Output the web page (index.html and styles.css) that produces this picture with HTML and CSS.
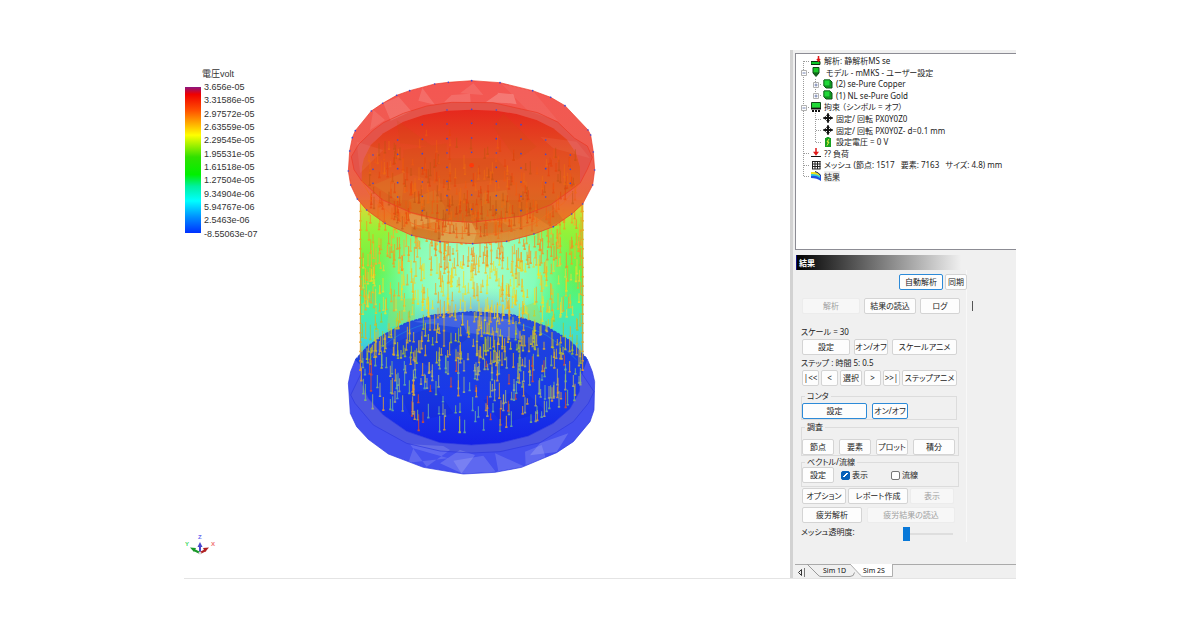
FILE: index.html
```
<!DOCTYPE html>
<html lang="ja">
<head>
<meta charset="utf-8">
<title>静解析MS se</title>
<link rel="stylesheet" href="styles.css">
</head>
<body>
<main class="app">
  <section class="viewport">
    <div class="legend">
      <h2 class="legend-title">電圧volt</h2>
      <div class="legend-bar"></div>
      <ol class="legend-labels">
        <li>3.656e-05</li><li>3.31586e-05</li><li>2.97572e-05</li><li>2.63559e-05</li><li>2.29545e-05</li><li>1.95531e-05</li><li>1.61518e-05</li><li>1.27504e-05</li><li>9.34904e-06</li><li>5.94767e-06</li><li>2.5463e-06</li><li>-8.55063e-07</li>
      </ol>
    </div>
    <svg class="model" viewBox="0 0 810 1245" aria-label="電圧コンタ">
      <defs>
        <linearGradient id="wall" x1="0" y1="400" x2="0" y2="900" gradientUnits="userSpaceOnUse">
          <stop offset="0" stop-color="#e0d838"/><stop offset=".16" stop-color="#96f238"/><stop offset=".42" stop-color="#68f24a"/><stop offset=".62" stop-color="#48f49a"/><stop offset=".8" stop-color="#42dcd0"/><stop offset="1" stop-color="#3c9cf4"/>
        </linearGradient>
        <radialGradient id="glow" cx="400" cy="610" r="310" gradientTransform="translate(0 122) scale(1 .8)" gradientUnits="userSpaceOnUse">
          <stop offset="0" stop-color="#aaffd0"/><stop offset=".6" stop-color="#8cffca" stop-opacity=".85"/><stop offset="1" stop-color="#60ff90" stop-opacity="0"/>
        </radialGradient>
        <radialGradient id="haze" cx="400" cy="770" r="240" gradientTransform="translate(0 385) scale(1 .5)" gradientUnits="userSpaceOnUse">
          <stop offset="0" stop-color="#5c88dc"/><stop offset=".5" stop-color="#78b4d8" stop-opacity=".7"/><stop offset="1" stop-color="#80d8d8" stop-opacity="0"/>
        </radialGradient>
        <linearGradient id="lid" x1="0" y1="120" x2="0" y2="457" gradientUnits="userSpaceOnUse">
          <stop offset="0" stop-color="#e52014"/><stop offset=".35" stop-color="#e24418"/><stop offset=".7" stop-color="#e05a18"/><stop offset="1" stop-color="#d2651c"/>
        </linearGradient>
        <linearGradient id="rim" x1="0" y1="32" x2="0" y2="521" gradientUnits="userSpaceOnUse">
          <stop offset="0" stop-color="#f4504c"/><stop offset=".5" stop-color="#ee5848"/><stop offset=".7" stop-color="#ea6038"/><stop offset=".83" stop-color="#ea7424"/><stop offset="1" stop-color="#d89038"/>
        </linearGradient>
        <linearGradient id="floor" x1="0" y1="725" x2="0" y2="1130" gradientUnits="userSpaceOnUse">
          <stop offset="0" stop-color="#2850dc"/><stop offset=".3" stop-color="#1c40e0"/><stop offset=".65" stop-color="#1838ea"/><stop offset="1" stop-color="#1420e6"/>
        </linearGradient>
      </defs>
      <path fill="url(#wall)" d="M60 390H730V900H60z"/>
      <path fill="url(#glow)" d="M60 390H730V860H60z"/>
      <path fill="url(#haze)" d="M100 640H700V830H100z"/>
      <g fill="#9be060" opacity=".5"><path d="M150 690l75-5v62l-85 30z"/><path d="M535 715l55-20 25 105z"/></g>

      <path fill="#4450ee" d="M46 870L80 832 130 795 200 758 280 735 395 725 520 735 620 770 690 812 742 868 757 905 764 935 762 1020 750 1055 700 1115 650 1148 545 1192 465 1207 370 1212 250 1192 145 1152 85 1108 50 1070 31 1030 25 940 32 905z"/>
      <path fill="url(#floor)" d="M46 870L80 832 130 795 200 758 280 735 395 725 520 735 620 770 690 812 742 868 722 925 718 965 690 1016 640 1060 565 1098 480 1119 394 1125 300 1118 200 1084 130 1035 85 985 66 940 66 890z"/>
      <path fill="#4b55e2" d="M66 905L32 975 45 1000 100 1065 200 1120 300 1143 395 1149 480 1145 600 1118 700 1055 745 1000 762 965 722 905 718 965 690 1016 640 1060 565 1098 480 1119 394 1125 300 1118 200 1084 130 1035 85 985 66 940z"/>
      <path fill="#fff" opacity=".16" d="M360 735l85 5 75 10 30 58-170-20zM300 1180l60-40 45 15-40 55zM600 1120l85-30-35 56-80 10z"/>
      <path fill="#fff" opacity=".14" d="M260 1190l70-50-20-12-100-5zM340 1172l90-15 37 48-102 6zM555 1145l50-20 14 45-62 15zM220 1135l105 30-120 13zM220 755l150-22-10 40zM465 1150l90 40-80 14z"/>
      <path fill="#1020b4" opacity=".18" d="M140 830l120-55 130 25-120 90zM410 810l170 10-40 70-120 15zM180 975l110-20 50 75-120 25zM430 990l120-30 70 65-135 35z"/>
      <g fill="none" stroke="#2c38e0" stroke-width="2">
        <path d="M46 870L32 905 25 940 31 1030 50 1070 85 1108 145 1152 250 1192 370 1212 465 1207 545 1192 650 1148 700 1115 750 1055 762 1020 764 935 757 905 742 868"/>
        <path d="M66 905L32 975 45 1000 100 1065 200 1120 300 1143 395 1149 480 1145 600 1118 700 1055 745 1000 762 965 722 905"/>
        <path d="M66 900V940L85 985 130 1035 200 1084 300 1118 394 1125 480 1119 565 1098 640 1060 690 1016 718 965 722 900"/>
      </g>
      <path d="M46 870L80 832 130 795 200 758 280 735 395 725 520 735 620 770 690 812 742 868" fill="none" stroke="#2448d8" stroke-width="4" stroke-dasharray="9 3"/>
      <path d="M86 870Q170 775 290 755M510 755Q630 780 710 870" fill="none" stroke="#20a8dc" stroke-width="2" opacity=".6"/>
      <g id="arrows-lower"></g>

      <g opacity=".96">
        <path fill="url(#rim)" d="M395 32L480 38 578 62 632 82 675 107 744 180 752 195 760 246 764 300 758 345 728 402 695 432 640 470 582 492 500 514 398 521 300 515 215 496 135 460 80 420 52 387 32 345 25 303 29 243 37 203 46 182 94 123 128 100 170 76 209 62 284 42 325 37z"/>
        <path fill="#e34d42" d="M335 97L459 98 593 128 653 156 704 205 742 228 757 262 742 298 720 340V290L708 248 680 208 640 175 590 150 530 132 470 122 394 119 320 122 250 135 190 155 130 190 92 225 72 265 66 333 42 299 34 260 56 223 98 182 130 158 190 130 260 108z"/>
        <path fill="url(#lid)" d="M394 119L470 122 530 132 590 150 640 175 680 208 708 248 720 290V340L633 404 547 438 398 457 312 452 211 427 126 389 65 333 66 290 72 265 92 225 130 190 190 155 250 135 320 122z"/>
      </g>
      <g fill="#fff">
        <path opacity=".13" d="M130 100l22 52 62-28-38-44zM235 92l50 12-38-50zM335 75l55-4 2 26h-80z"/>
        <path opacity=".2" d="M437 97l40-28 20 30zM472 68l48 5 10 30-35-5z"/>
        <path opacity=".1" d="M100 120l35 30-45 30zM360 70l40-30 30 35z"/>
        <path opacity=".06" d="M485 42l95 22 75 90-90-30zM600 200l110 15 40 50-110-30zM50 215l80 25-70 70z"/>
      </g>
      <path fill="#d89a30" opacity=".2" d="M205 390l80-30 30 50-4 40-100-22zM410 450l20-80 70-10 20 90zM100 345l95-40-10 95z"/>
      <path fill="#c0601c" opacity=".3" d="M215 470l90 18-5 26-85-18zM395 458l90-2 45 26-100 10zM570 430l65-26 35 45-40 20z"/>
      <path fill="#e0c070" opacity=".4" d="M312 452l83 6 15 30-10 33-100-7zM205 428l90 25-80 17z"/>
      <path fill="#c9500e" opacity=".16" d="M190 240l130-20v45h150l50 60-200 20-130-40zM490 130l100 100-60 40-70-100zM170 150l110 80-100-10z"/>
      <g id="arrows-upper"></g>
      <g fill="none" stroke="#ec3824" stroke-width="2">
        <path id="outer" d="M395 32L480 38 578 62 632 82 675 107 744 180 752 195 760 246 764 300 758 345 728 402 695 432 640 470 582 492 500 514 398 521 300 515 215 496 135 460 80 420 52 387 32 345 25 303 29 243 37 203 46 182 94 123 128 100 170 76 209 62 284 42 325 37z"/>
        <path d="M335 97L459 98 593 128 653 156 704 205 742 228 757 262 742 298 720 340 633 404 547 438 398 457 312 452 211 427 126 389 65 333 42 299 34 260 56 223 98 182 130 158 190 130 260 108z"/>
        <path d="M65 333L90 375 150 430 230 466 330 490 470 492 580 462 670 400 720 340" stroke="#f06a20"/>
      </g>
      <g id="nodes" fill="#3b48d8"></g>
      <circle cx="395" cy="286" r="7" fill="#ff3808"/>
    </svg>
    <svg class="axes" viewBox="0 0 32 24" aria-label="座標軸">
      <g class="axis-text"><text x="13" y="6" fill="#6868f0">Z</text><text x="0" y="13" fill="#40d860">Y</text><text x="26" y="13" fill="#f07070">X</text></g>
      <path d="M15 20V13" stroke="#4848d0" stroke-width="2"/><path d="M12.500 14l2.500-5 2.500 5z" fill="#4848d0"/>
      <path d="M15 20l-6-3" stroke="#189828" stroke-width="2"/><path d="M5 14.500l6 .5-2 4z" fill="#189828"/>
      <path d="M15 20l6-3" stroke="#b02020" stroke-width="2"/><path d="M24 14.500l-6 .5 2 4z" fill="#b02020"/>
      <circle cx="15" cy="20" r="1.500" fill="#ddd"/>
    </svg>
  </section>

  <aside class="panel">
    <div class="tree">
      <svg class="tree-lines" viewBox="0 0 40 127" aria-hidden="true">
        <g fill="none" stroke="#9a9a9a" stroke-dasharray="1 1"><path d="M7.500 6V121M8 6.500h6M8 17.500h6M8 52.500h6M8 98.500h6M8 110.500h6M8 121.500h6"/><path d="M19.500 24V42M20 29.500h6M20 40.500h6M19.500 58V87M20 64.500h6M20 75.500h6M20 87.500h6"/></g>
        <g fill="#fff" stroke="#b0b0b0"><path d="M5.500 15.500h5v5h-5zM5.500 50.500h5v5h-5zM17.500 27.500h5v5h-5zM17.500 38.500h5v5h-5z"/></g>
        <path d="M6.500 18h3M6.500 53h3M18.500 30h3M18.500 41h3M20 28.500v3M20 39.500v3" stroke="#7080b0"/>
      </svg>
      <ul class="tree-list">
        <li><svg viewBox="0 0 10 10"><path d="M0 5.500h9v3H0z" fill="#10c828" stroke="#083010"/><path d="M7.500 0v5M6 3l1.500 2L9 3" stroke="#e01818" stroke-width="1.500" fill="none"/></svg>解析: 静解析MS se</li>
        <li><svg viewBox="0 0 10 10"><path d="M2 .5h6V6L5 9.500 2 6z" fill="#18c828" stroke="#104818"/><path d="M2 6h6M4 6v2h2V6" stroke="#104818" fill="none"/></svg>&nbsp;モデル - mMKS - ユーザー設定</li>
        <li class="child"><svg viewBox="0 0 10 10"><path d="M1 1h6l2 2v6H3L1 7z" fill="#10a820" stroke="#104818"/><path d="M1 1h6v6H1z" fill="#20d838" stroke="#108020"/></svg>(2) se-Pure Copper</li>
        <li class="child"><svg viewBox="0 0 10 10"><path d="M1 1h6l2 2v6H3L1 7z" fill="#10a820" stroke="#104818"/><path d="M1 1h6v6H1z" fill="#20d838" stroke="#108020"/></svg>(1) NL se-Pure Gold</li>
        <li><svg viewBox="0 0 10 10"><path d="M.5.5h9V6h-9z" fill="#20d838" stroke="#104818"/><path d="M0 6h10v1.500H0zM1 8h2v2H1zM4 8h2v2H4zM7 8h2v2H7z" fill="#111"/></svg>拘束 （シンボル = オフ）</li>
        <li class="child"><svg viewBox="0 0 10 10"><path d="M5 0v10M0 5h10" stroke="#111"/><path d="M3 3l2-3 2 3zM3 7l2 3 2-3zM3 3L0 5l3 2zM7 3l3 2-3 2z" fill="#111"/><path d="M3 5h4M5 3v4" stroke="#111" stroke-width="2"/></svg>固定/ 回転 PX0Y0Z0</li>
        <li class="child"><svg viewBox="0 0 10 10"><path d="M5 0v10M0 5h10" stroke="#111"/><path d="M3 3l2-3 2 3zM3 7l2 3 2-3zM3 3L0 5l3 2zM7 3l3 2-3 2z" fill="#111"/><path d="M3 5h4M5 3v4" stroke="#111" stroke-width="2"/></svg>固定/ 回転 PX0Y0Z- d=0.1 mm</li>
        <li class="child"><svg viewBox="0 0 10 10"><path d="M3.500 0h3v1H8v9H2V1h1.500z" fill="#18a020"/><path d="M6 2L4 5h2L4 8.500" stroke="#e8f040" fill="none"/></svg>設定電圧 = 0 V</li>
        <li><svg viewBox="0 0 10 10"><path d="M5 0v6M3.500 4.500L5 6.500l1.500-2z" stroke="#e01818" stroke-width="1.500" fill="#e01818"/><path d="M0 8.500h10" stroke="#111"/></svg>?? 負荷</li>
        <li><svg viewBox="0 0 10 10"><path d="M1.500 1v8M4 1v8M6.500 1v8M9 1v8M1 1.500h8.500M1 4h8.500M1 6.500h8.500M1 9h8.500" stroke="#222"/></svg>メッシュ (節点: 1517 &nbsp; 要素: 7163 &nbsp; サイズ: 4.8) mm</li>
        <li class="selected"><svg viewBox="0 0 10 10"><path d="M0 1h4q4 1 6 3v6Q6 7 0 7z" fill="#2050e0"/><path d="M0 1h4q4 1 5 3v3Q5 4 0 5z" fill="#30c8e0"/><path d="M0 1h4q4 1 5 4Q5 2.500 0 3z" fill="#f0e020"/><path d="M4 .5q4 1 5.500 4" stroke="#333" fill="none"/></svg><span>結果</span></li>
      </ul>
    </div>

    <h1 class="title">結果</h1>
    <form class="form">
      <div class="row top"><button type="button" class="w44 active">自動解析</button><button type="button" class="w22">同期</button></div>
      <div class="row run"><button type="button" class="w58" disabled>解析</button><button type="button" class="w52">結果の読込</button><button type="button" class="w40">ログ</button><span class="caret"></span></div>
      <p class="text scale">スケール = 30</p>
      <div class="row scale-row"><button type="button" class="w48">設定</button><button type="button" class="w34">オン/オフ</button><button type="button" class="w65">スケールアニメ</button></div>
      <p class="text">ステップ : 時間 5: 0.5</p>
      <div class="row steps"><button type="button" class="w17">|&lt;&lt;</button><button type="button" class="w17">&lt;</button><button type="button" class="w22">選択</button><button type="button" class="w17">&gt;</button><button type="button" class="w17">&gt;&gt;|</button><button type="button" class="w55">ステップアニメ</button></div>
      <fieldset class="contour"><legend>コンタ</legend><div class="group"><button type="button" class="w65 active">設定</button><button type="button" class="w36 active">オン/オフ</button></div></fieldset>
      <fieldset class="survey"><legend>調査</legend><div class="group"><button type="button" class="w32">節点</button><button type="button" class="w32">要素</button><button type="button" class="w32">プロット</button><button type="button" class="w42">積分</button></div></fieldset>
      <fieldset class="vector"><legend>ベクトル/流線</legend><div class="group"><button type="button" class="w32">設定</button><label><input type="checkbox" checked>表示</label><label class="stream"><input type="checkbox">流線</label></div></fieldset>
      <div class="row options"><button type="button" class="w44">オプション</button><button type="button" class="w60">レポート作成</button><button type="button" class="w44" disabled>表示</button></div>
      <div class="row fatigue"><button type="button" class="w60">疲労解析</button><button type="button" class="w88" disabled>疲労結果の読込</button></div>
      <div class="row mesh"><label for="alpha">メッシュ透明度:</label><input id="alpha" type="range" min="0" max="100" value="0"></div>
    </form>
    <nav class="tabs">
      <button type="button" class="scroll" aria-label="前へ"><svg viewBox="0 0 9 9"><path d="M5.500 1.500v6l-3-3z" fill="none" stroke="#333"/><path d="M8.500 0v9" stroke="#777"/></svg></button>
      <a href="#sim1d" class="tab">Sim 1D<svg viewBox="0 0 48 13" preserveAspectRatio="none"><path d="M0 0l11 11q1 1.500 3 1.500h29q4 0 4.500-4" fill="none" stroke="#999"/></svg></a>
      <a href="#sim2s" class="tab current"><svg viewBox="0 0 46 13" preserveAspectRatio="none"><path d="M0 0l11 11q1 1.500 3 1.500h31.500V0" fill="#fff" stroke="#aaa"/></svg>Sim 2S</a>
    </nav>
  </aside>
</main>
<script src="field.js"></script>
</body>
</html>
```
FILE: styles.css
```
* { box-sizing: border-box; }
body {
  margin: 0;
  padding: 50px 184px;
  background: #fff;
  color: #222;
  font: 8px/12px "Noto Sans", "Noto Sans CJK JP", sans-serif;
  font-feature-settings: "palt";
}
h1, h2, p, ul, ol { margin: 0; padding: 0; list-style: none; font-weight: 400; }
.app { display: grid; grid-template-columns: 1fr 226px; min-height: calc(100vh - 101px); border-bottom: 1px solid #e4e4e4; }

.viewport { display: grid; grid-template-columns: 156px 270px 1fr; grid-template-rows: auto 1fr; }
.legend { display: grid; grid-template-columns: 16px auto; column-gap: 4px; padding: 18px 0 0 1px; align-content: start; font: 9px/13px "Liberation Sans", "Noto Sans CJK JP", sans-serif; color: #333; }
.legend-title { grid-column: 1 / 3; padding-left: 17px; font-size: 9px; line-height: 13px; }
.legend-bar { height: 146px; margin-top: 6px; background: linear-gradient(#8c1480, #f00000 5%, #ff5000 16%, #ffff00 33%, #30e000 48%, #00f000 60%, #00f0a0 68%, #00ffff 78%, #0090ff 89%, #0030ff); }
.legend-labels { display: grid; grid-template-rows: repeat(12, 1fr); height: 160px; margin-left: -1px; }
.model { grid-column: 2; grid-row: 1 / 3; width: 270px; margin-top: 20px; }
.axes { grid-column: 1; grid-row: 2; align-self: end; width: 32px; margin: 0 0 21px 1px; }
.axis-text { font: 700 6px "Liberation Sans", sans-serif; }

.panel { display: flex; flex-direction: column; padding: 3px 0 0 2px; background: #f0f0f0; border-left: 3px solid #d2d2d2; }
.tree { position: relative; height: 197px; padding-top: 1px; background: #fff; border: solid #8c8c94; border-width: 1px 0 1px 1px; }
.tree-lines { position: absolute; top: 1px; left: 0; width: 40px; height: 127px; }
.tree-list { position: relative; display: grid; grid-template-rows: repeat(11, 1fr); height: 127px; line-height: 11px; }
.tree-list li { display: flex; align-items: center; gap: 3px; min-height: 0; padding-left: 15px; white-space: nowrap; }
.tree-list .child { padding-left: 27px; }
.tree-list svg { width: 10px; height: 10px; flex: none; }
.selected span { background: #eee; }

.title { height: 15px; margin: 5px 0 0 1px; padding-left: 2px; border-left: 1px solid #101080; background: linear-gradient(90deg, #000, #111 5%, #f0f0f0 75%); color: #fff; font-size: 8px; line-height: 15px; font-weight: 700; }
.form { width: 172px; padding: 4px 9px 0 6px; border-right: 1px solid #f8f8f8; }
button { flex: none; height: 16px; padding: 0; border: 1px solid #d4d4d4; border-radius: 2px; background: #fdfdfd; color: #222; font: inherit; font-feature-settings: inherit; line-height: 12px; white-space: nowrap; text-align: center; }
button:disabled { color: #a0a0a0; background: #f7f7f7; border-color: #ececec; }
button.active { border-color: #2c8ad8; }
.row { display: flex; gap: 4px; padding-left: 1px; }
.top { gap: 2px; justify-content: flex-end; margin-right: -10px; }
.run { margin: 8px -20px 0 0; }
.caret { width: 1px; height: 10px; margin: 3px 0 0 8px; flex: none; background: #555; }
.scale { margin-top: 12px; }
.scale-row { margin: 1px 0 2px; }
.steps { gap: 2px; margin-top: 1px; }
fieldset { min-width: 0; margin: 0; padding: 0; border: 1px solid #dcdcdc; }
legend { height: 10px; padding: 0 2px; margin-left: 3px; line-height: 10px; }
.group { display: flex; gap: 5px; }
.contour { margin-top: 5px; padding-top: 2px; }
.survey { margin: 2px -2px 0 0; padding-top: 7px; }
.vector { margin: 1px -2px 0 0; padding-bottom: 3px; }
.vector label { display: flex; align-items: center; gap: 2px; margin-left: 2px; }
.vector .stream { margin-left: 18px; }
input[type="checkbox"] { appearance: none; width: 9px; height: 9px; margin: 0; border: 1px solid #777; border-radius: 2px; background: #fff; }
input[type="checkbox"]:checked { border-color: #0860b8; background: linear-gradient(135deg, transparent 40%, #fff 40% 60%, transparent 60%) center / 5px 4px no-repeat #0860b8; }
.options { gap: 2px; margin-top: 1px; }
.fatigue { margin-top: 3px; gap: 5px; }
.mesh { align-items: center; justify-content: space-between; height: 16px; margin-top: 3px; padding: 0; }
.mesh label { margin-bottom: 4px; }
input[type="range"] { appearance: none; width: 50px; height: 14px; margin: 0 4px 0 0; background: linear-gradient(#dedede, #dedede) center / 100% 2px no-repeat; }
input[type="range"]::-webkit-slider-thumb { appearance: none; width: 7px; height: 14px; background: #0878d8; }
.w17 { width: 17px; } .w22 { width: 22px; } .w32 { width: 32px; } .w34 { width: 34px; } .w36 { width: 36px; }
.w40 { width: 40px; } .w42 { width: 42px; } .w44 { width: 44px; } .w48 { width: 48px; } .w52 { width: 52px; }
.w55 { width: 55px; } .w58 { width: 58px; } .w60 { width: 60px; } .w65 { width: 65px; } .w88 { width: 88px; }

.tabs { display: flex; height: 14px; margin-top: auto; border-top: 1px solid #aaa; font-size: 7px; }
.tabs .scroll { width: 12px; height: 12px; border: 0; background: none; }
.scroll svg { display: block; width: 9px; height: 9px; margin: 2px 0 0 1px; }
.tab { position: relative; z-index: 0; width: 48px; padding-left: 16px; line-height: 12px; color: #111; text-decoration: none; white-space: nowrap; }
.tab svg { position: absolute; inset: -1px 0 0; width: 100%; height: 13px; z-index: -1; }
.current { width: 43px; padding-left: 13px; margin-left: -5px; }
```
FILE: field.js
```
const NS = "http://www.w3.org/2000/svg";
let seed = 91;
function random() {
  seed = (seed + 0x6d2b79f5) | 0;
  let t = Math.imul(seed ^ (seed >>> 15), 1 | seed);
  t = (t + Math.imul(t ^ (t >>> 7), 61 | t)) ^ t;
  return ((t ^ (t >>> 14)) >>> 0) / 4294967296;
}
const pick = (list) => list[Math.floor(random() * list.length)];

function arrow(parent, x, y, length, color, opacity) {
  const path = document.createElementNS(NS, "path");
  path.setAttribute("d", `M${x - 1.5} ${y}h3v${length}h2v5h-7v-5h2z`);
  path.setAttribute("fill", color);
  path.setAttribute("opacity", opacity);
  parent.append(path);
}

const lower = document.getElementById("arrows-lower");
for (let i = 0; i < 1100; i++) {
  const x = Math.round(64 + random() * 662);
  const y = Math.round(400 + random() * 660);
  const edge = Math.sqrt(Math.max(0, 1 - ((x - 395) / 335) ** 2));
  if (y > 900 + 160 * edge || (y > 880 && random() < 0.4)) continue;
  const colors = y < 560 ? ["#f88c20", "#f0a020", "#f8b030"]
    : y < 720 ? ["#f8c020", "#f0a828", "#f8e020", "#e8d838"]
    : y < 850 ? ["#e8b020", "#d0d020", "#a8c828", "#d8b838"]
    : ["#88c070", "#a8b878", "#f0a828", "#e85020", "#70b8a0", "#c0b868"];
  arrow(lower, x, y, 14 + random() * 32, pick(colors), 0.8);
}
for (const x of [61, 728]) {
  for (let y = 400; y < 900; y += 28) arrow(lower, x, y, 22, "#f0a020", 0.9);
}

const upper = document.getElementById("arrows-upper");
for (let i = 0; i < 420; i++) {
  const x = 80 + random() * 630;
  const y = 170 + Math.sqrt(random()) * 300;
  const edge = Math.sqrt(1 - ((x - 395) / 340) ** 2);
  if (y > 315 + 160 * edge || y < 290 - 130 * edge) continue;
  arrow(upper, Math.round(x), Math.round(y), 14 + random() * 24, pick(["#e84008", "#f05810", "#c05010", "#f06a10"]), 0.6);
}

const nodes = document.getElementById("nodes");
function node(x, y) {
  const dot = document.createElementNS(NS, "circle");
  dot.setAttribute("cx", x);
  dot.setAttribute("cy", y);
  dot.setAttribute("r", 2.5);
  nodes.append(dot);
}
const outline = document.getElementById("outer").getAttribute("d").match(/\d+/g).map(Number);
for (let i = 0; i < outline.length; i += 2) node(outline[i], outline[i + 1]);
for (const [y, half] of [[118, 1], [160, 2], [204, 3], [247, 4], [290, 4], [332, 4], [375, 3], [418, 2]]) {
  for (let k = -half; k <= half; k++) node(395 + k * 74, y + Math.abs(k) * 2);
}
```
